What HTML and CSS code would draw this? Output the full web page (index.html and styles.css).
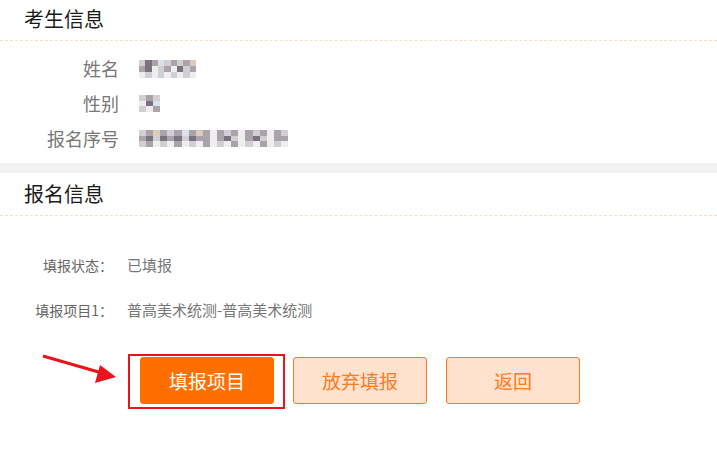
FILE: index.html
```html
<!DOCTYPE html>
<html lang="zh-CN">
<head>
<meta charset="utf-8">
<title>报名信息</title>
<link rel="stylesheet" href="styles.css">
</head>
<body>
<section class="card">
  <h2 class="card-title">考生信息</h2>
  <div class="info-list">
    <div class="info-row">
      <span class="info-label">姓名</span>
      <span class="mosaic m-name">
        <i class="b"></i><i class="d"></i><i class="c"></i><i class="f"></i><i class="b"></i><i class="c"></i><i class="b"></i><i class="c"></i><i class="e"></i>
        <i class="c"></i><i class="d"></i><i class="a"></i><i class="b"></i><i class="c"></i><i class="a"></i><i class="d"></i><i class="b"></i><i class="c"></i>
        <i class="a"></i><i class="b"></i><i class="a"></i><i class="b"></i><i class="a"></i><i class="b"></i><i class="a"></i><i class="b"></i><i class="a"></i>
      </span>
    </div>
    <div class="info-row">
      <span class="info-label">性别</span>
      <span class="mosaic m-sex">
        <i class="b"></i><i class="c"></i><i class="b"></i>
        <i class="a"></i><i class="d"></i><i class="f"></i>
        <i class="b"></i><i class="a"></i><i class="c"></i>
      </span>
    </div>
    <div class="info-row">
      <span class="info-label">报名序号</span>
      <span class="mosaic m-serial">
        <i class="b"></i><i class="c"></i><i class="e"></i><i class="c"></i><i class="b"></i><i class="c"></i><i class="f"></i><i class="c"></i><i class="e"></i><i class="c"></i><i class="a"></i><i class="c"></i><i class="b"></i><i class="c"></i><i class="a"></i><i class="c"></i><i class="b"></i><i class="c"></i><i class="a"></i><i class="c"></i><i class="b"></i>
        <i class="c"></i><i class="d"></i><i class="b"></i><i class="d"></i><i class="c"></i><i class="d"></i><i class="b"></i><i class="d"></i><i class="c"></i><i class="c"></i><i class="a"></i><i class="c"></i><i class="d"></i><i class="b"></i><i class="a"></i><i class="c"></i><i class="d"></i><i class="b"></i><i class="a"></i><i class="c"></i><i class="c"></i>
        <i class="b"></i><i class="c"></i><i class="a"></i><i class="b"></i><i class="a"></i><i class="c"></i><i class="a"></i><i class="b"></i><i class="a"></i><i class="c"></i><i class="a"></i><i class="b"></i><i class="a"></i><i class="c"></i><i class="a"></i><i class="b"></i><i class="a"></i><i class="c"></i><i class="a"></i><i class="b"></i><i class="a"></i>
      </span>
    </div>
  </div>
</section>
<div class="band"></div>
<section class="card">
  <h2 class="card-title card-title-2">报名信息</h2>
  <div class="status-list">
    <div class="status-row">
      <span class="status-label">填报状态：</span>
      <span class="status-value">已填报</span>
    </div>
    <div class="status-row">
      <span class="status-label">填报项目1：</span>
      <span class="status-value">普高美术统测-普高美术统测</span>
    </div>
  </div>
  <div class="actions">
    <svg class="arrow" width="130" height="50" viewBox="0 0 130 50" aria-hidden="true">
      <line x1="43" y1="14" x2="102" y2="31" stroke="#e8141c" stroke-width="3"/>
      <polygon points="116,35 100,23 95,41" fill="#e8141c"/>
    </svg>
    <div class="highlight"></div>
    <button class="btn btn-primary">填报项目</button>
    <button class="btn btn-light">放弃填报</button>
    <button class="btn btn-light">返回</button>
  </div>
</section>
</body>
</html>
```
FILE: styles.css
```css
* { box-sizing: border-box; }
html, body {
  margin: 0;
  padding: 0;
  background: #fff;
}
body {
  font-family: "Noto Sans CJK SC", "Microsoft YaHei", "Noto Sans", sans-serif;
  color: #222;
  width: 717px;
  height: 451px;
  overflow: hidden;
}
.card { background: #fff; }
.card-title {
  margin: 0;
  padding-left: 24px;
  height: 41px;
  line-height: 38px;
  font-size: 20px;
  font-weight: normal;
  color: #1a1a1a;
  border-bottom: 1px dashed #ffdcbc;
}
.card-title-2 {
  height: 43px;
  line-height: 42px;
}
.info-list {
  padding: 10px 0 7px;
}
.info-row {
  display: flex;
  align-items: center;
  height: 35px;
}
.info-label {
  width: 119px;
  text-align: right;
  font-size: 18px;
  color: #777;
  line-height: 35px;
}
.mosaic {
  display: grid;
  margin-left: 20px;
}
.mosaic i { display: block; }
.m-name {
  width: 57px;
  height: 18px;
  grid-template-columns: repeat(9, 1fr);
  grid-template-rows: repeat(3, 1fr);
}
.m-sex {
  width: 21px;
  height: 17px;
  grid-template-columns: repeat(3, 1fr);
  grid-template-rows: repeat(3, 1fr);
}
.m-serial {
  width: 149px;
  height: 17px;
  grid-template-columns: repeat(21, 1fr);
  grid-template-rows: repeat(3, 1fr);
}
.mosaic .a { background: #eeeef0; }
.mosaic .b { background: #d2cfd3; }
.mosaic .c { background: #aaa3a9; }
.mosaic .d { background: #7a7280; }
.mosaic .e { background: #ddcabd; }
.mosaic .f { background: #d8e1ec; }
.band {
  height: 10px;
  background: #f2f2f2;
}
.status-list {
  padding-top: 26px;
}
.status-row {
  display: flex;
  align-items: center;
  height: 45px;
  font-size: 14px;
  color: #666;
}
.status-label {
  width: 113px;
  text-align: right;
}
.status-value {
  margin-left: 14px;
  font-size: 15px;
  color: #777;
}
.actions {
  position: relative;
  display: flex;
  gap: 19px;
  padding-left: 140px;
  margin-top: 25px;
}
.btn {
  width: 134px;
  height: 47px;
  border-radius: 3px;
  font-family: inherit;
  font-size: 19px;
  padding: 0;
  cursor: pointer;
}
.btn-primary {
  background: #ff6f00;
  border: 1px solid #ff6f00;
  color: #fff;
}
.btn-light {
  background: #ffe2cd;
  border: 1px solid #ff7a1a;
  color: #ff7a1a;
}
.highlight {
  position: absolute;
  left: 128px;
  top: -3px;
  width: 157px;
  height: 55px;
  border: 2px solid #e8141c;
  pointer-events: none;
}
.arrow {
  position: absolute;
  left: 0;
  top: -15px;
}
```
